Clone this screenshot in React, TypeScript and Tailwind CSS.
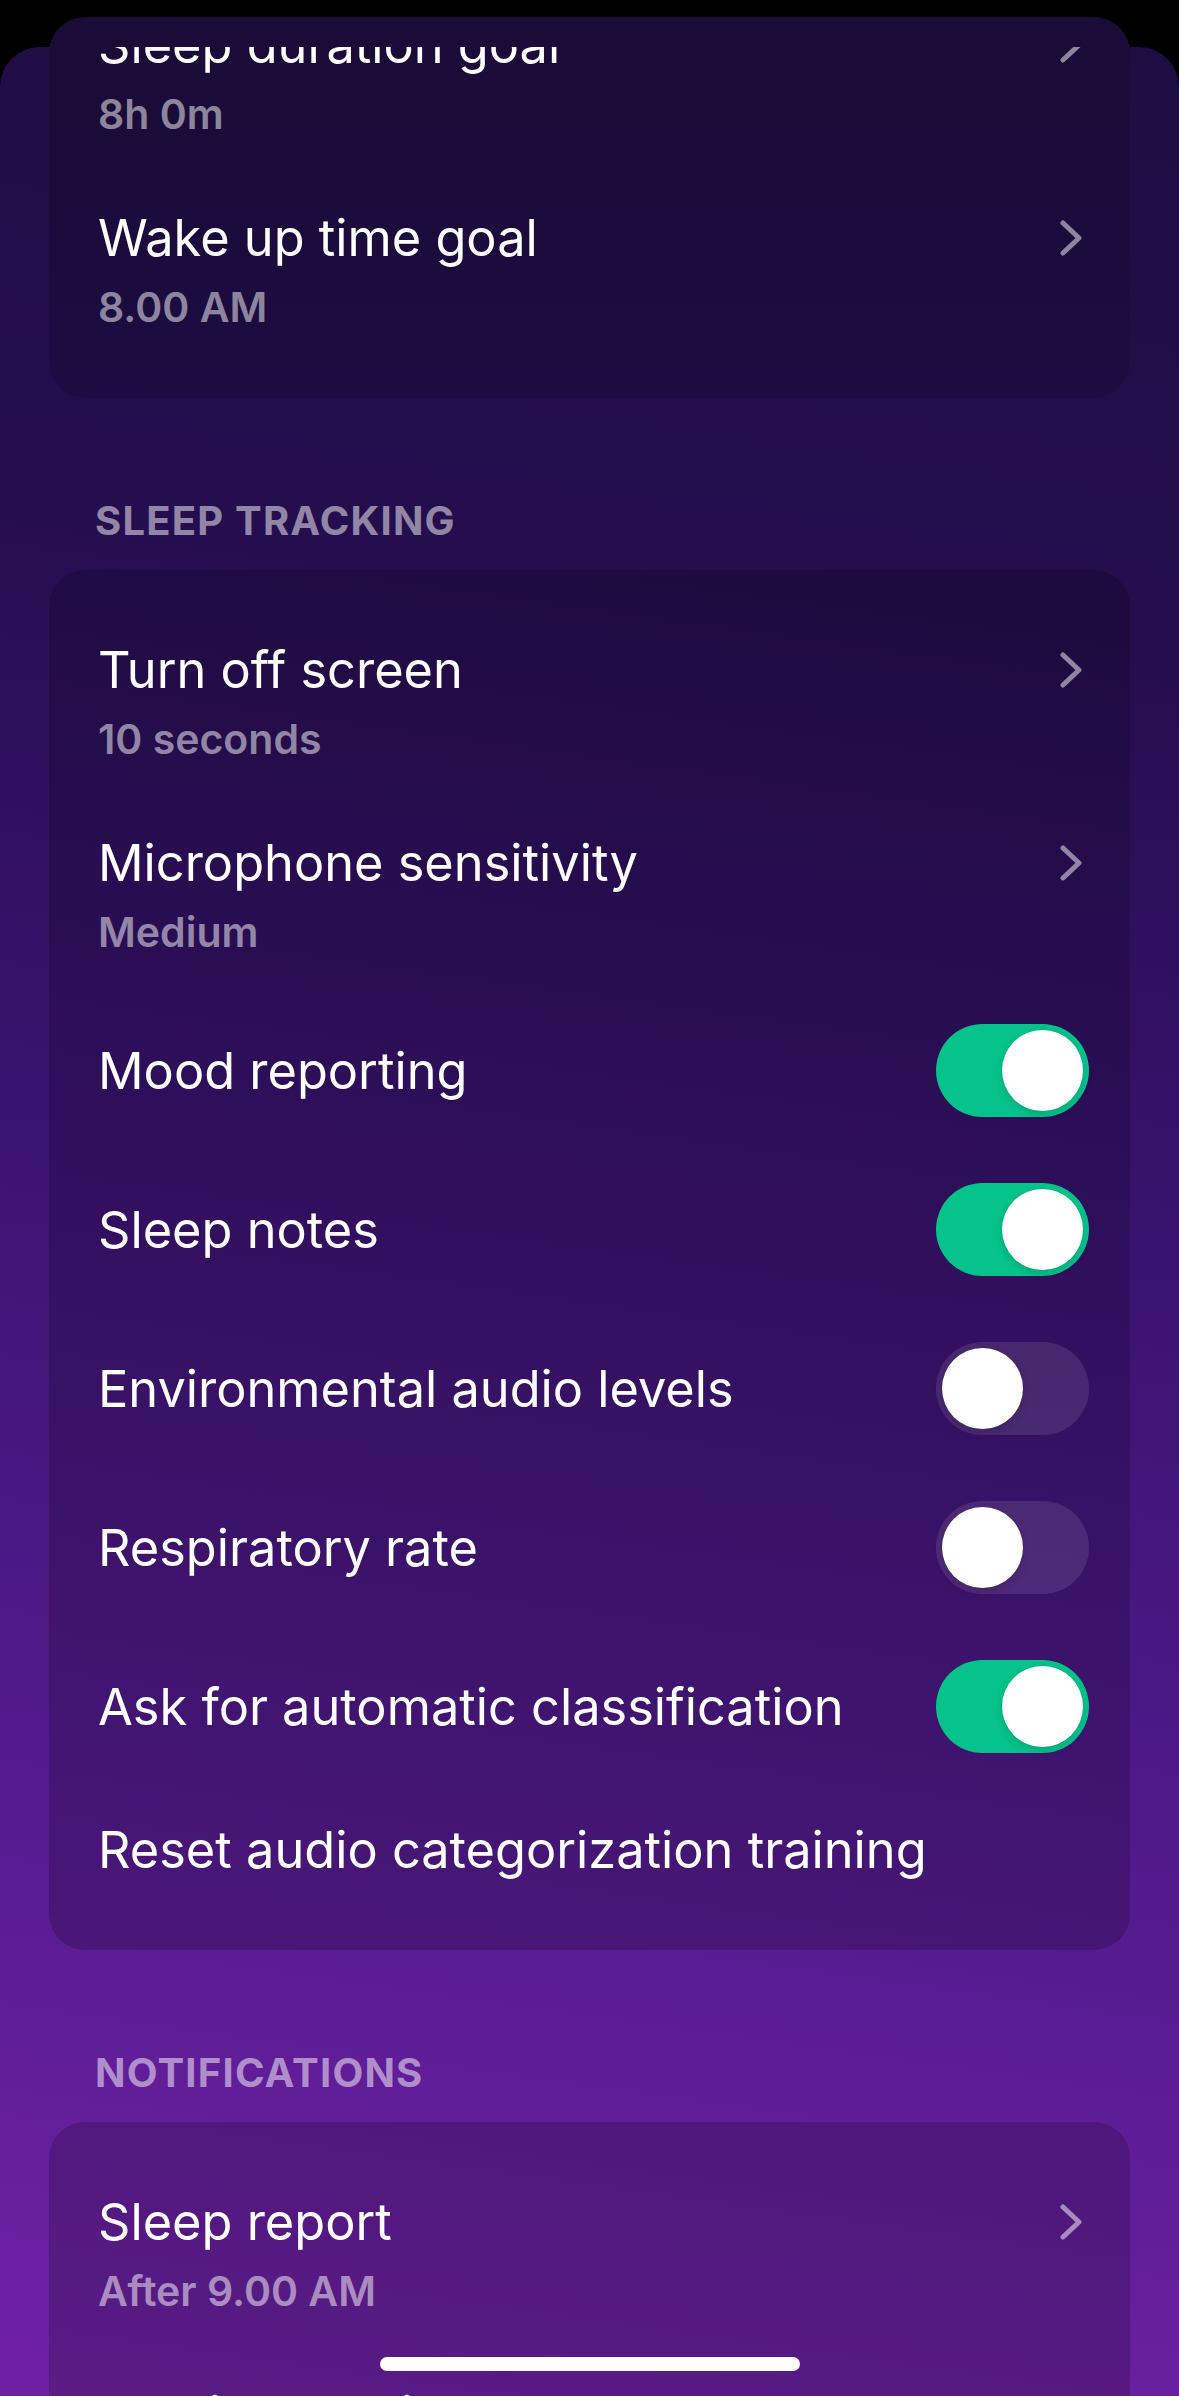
import type { ReactNode } from 'react';

function Chevron() {
  return (
    <svg width="24" height="36" viewBox="0 0 24 36" fill="none" className="shrink-0">
      <polyline
        points="4,3 20,18 4,33"
        stroke="rgba(255,255,255,0.5)"
        strokeWidth="5"
        strokeLinecap="round"
        strokeLinejoin="round"
      />
    </svg>
  );
}

function Toggle({ on }: { on: boolean }) {
  return (
    <div
      className={`flex h-[93px] w-[153px] shrink-0 items-center rounded-full p-[6px] ${
        on ? 'justify-end bg-[#05c38a]' : 'justify-start bg-white/10'
      }`}
    >
      <div className="h-[81px] w-[81px] rounded-full bg-white shadow-[0_3px_8px_rgba(0,0,0,0.15)]" />
    </div>
  );
}

function NavRow({ title, value }: { title: string; value: string }) {
  return (
    <div className="flex items-start justify-between py-[35px] pl-[49px] pr-[47px]">
      <div>
        <div className="text-[50.5px] leading-[60px] text-white">{title}</div>
        <div className="mt-[15px] text-[41px] font-semibold leading-[48px] text-white/50">{value}</div>
      </div>
      <div className="flex h-[60px] items-center">
        <Chevron />
      </div>
    </div>
  );
}

function ToggleRow({ title, on }: { title: string; on: boolean }) {
  return (
    <div className="flex items-center justify-between py-[33px] pl-[49px] pr-[41px]">
      <div className="text-[50.5px] leading-[60px] text-white">{title}</div>
      <Toggle on={on} />
    </div>
  );
}

function Header({ children }: { children: ReactNode }) {
  return (
    <div className="mb-[26px] mt-[100px] pl-[46px] text-[40px] font-bold uppercase leading-[46px] tracking-[0.03em] text-white/50">
      {children}
    </div>
  );
}

export default function App() {
  return (
    <div className="relative h-[2396px] w-[1179px] overflow-hidden bg-black font-['Inter',sans-serif]">
      <div className="mt-[47px] flow-root min-h-[2349px] rounded-t-[40px] bg-[linear-gradient(188deg,#1e0d42_0%,#240e4e_22%,#3a1370_45%,#521a8c_68%,#6a20a0_88%,#7222a6_100%)] px-[49px]">
        {/* top card, scrolled under the sheet edge */}
        <div className="-mt-[30px] rounded-[36px] bg-[linear-gradient(#1a0b37,#1d0c41)] pt-[30px] pb-[32px]">
          <div className="overflow-hidden">
            <div className="-mt-[67px]">
              <NavRow title="Sleep duration goal" value="8h 0m" />
              <NavRow title="Wake up time goal" value="8.00 AM" />
            </div>
          </div>
        </div>

        <Header>Sleep tracking</Header>
        <div className="rounded-[36px] bg-black/[0.18] py-[35px]">
          <NavRow title="Turn off screen" value="10 seconds" />
          <NavRow title="Microphone sensitivity" value="Medium" />
          <ToggleRow title="Mood reporting" on />
          <ToggleRow title="Sleep notes" on />
          <ToggleRow title="Environmental audio levels" on={false} />
          <ToggleRow title="Respiratory rate" on={false} />
          <ToggleRow title="Ask for automatic classification" on />
          <div className="pb-[35px] pl-[49px] pt-[34px] text-[50.5px] leading-[60px] text-white">
            Reset audio categorization training
          </div>
        </div>

        <Header>Notifications</Header>
        <div className="rounded-[36px] bg-black/[0.18] py-[35px]">
          <NavRow title="Sleep report" value="After 9.00 AM" />
          <NavRow title="Bedtime reminder" value="Off" />
        </div>
      </div>

      <div className="absolute bottom-[25px] left-[380px] h-[14px] w-[420px] rounded-full bg-white" />
    </div>
  );
}
